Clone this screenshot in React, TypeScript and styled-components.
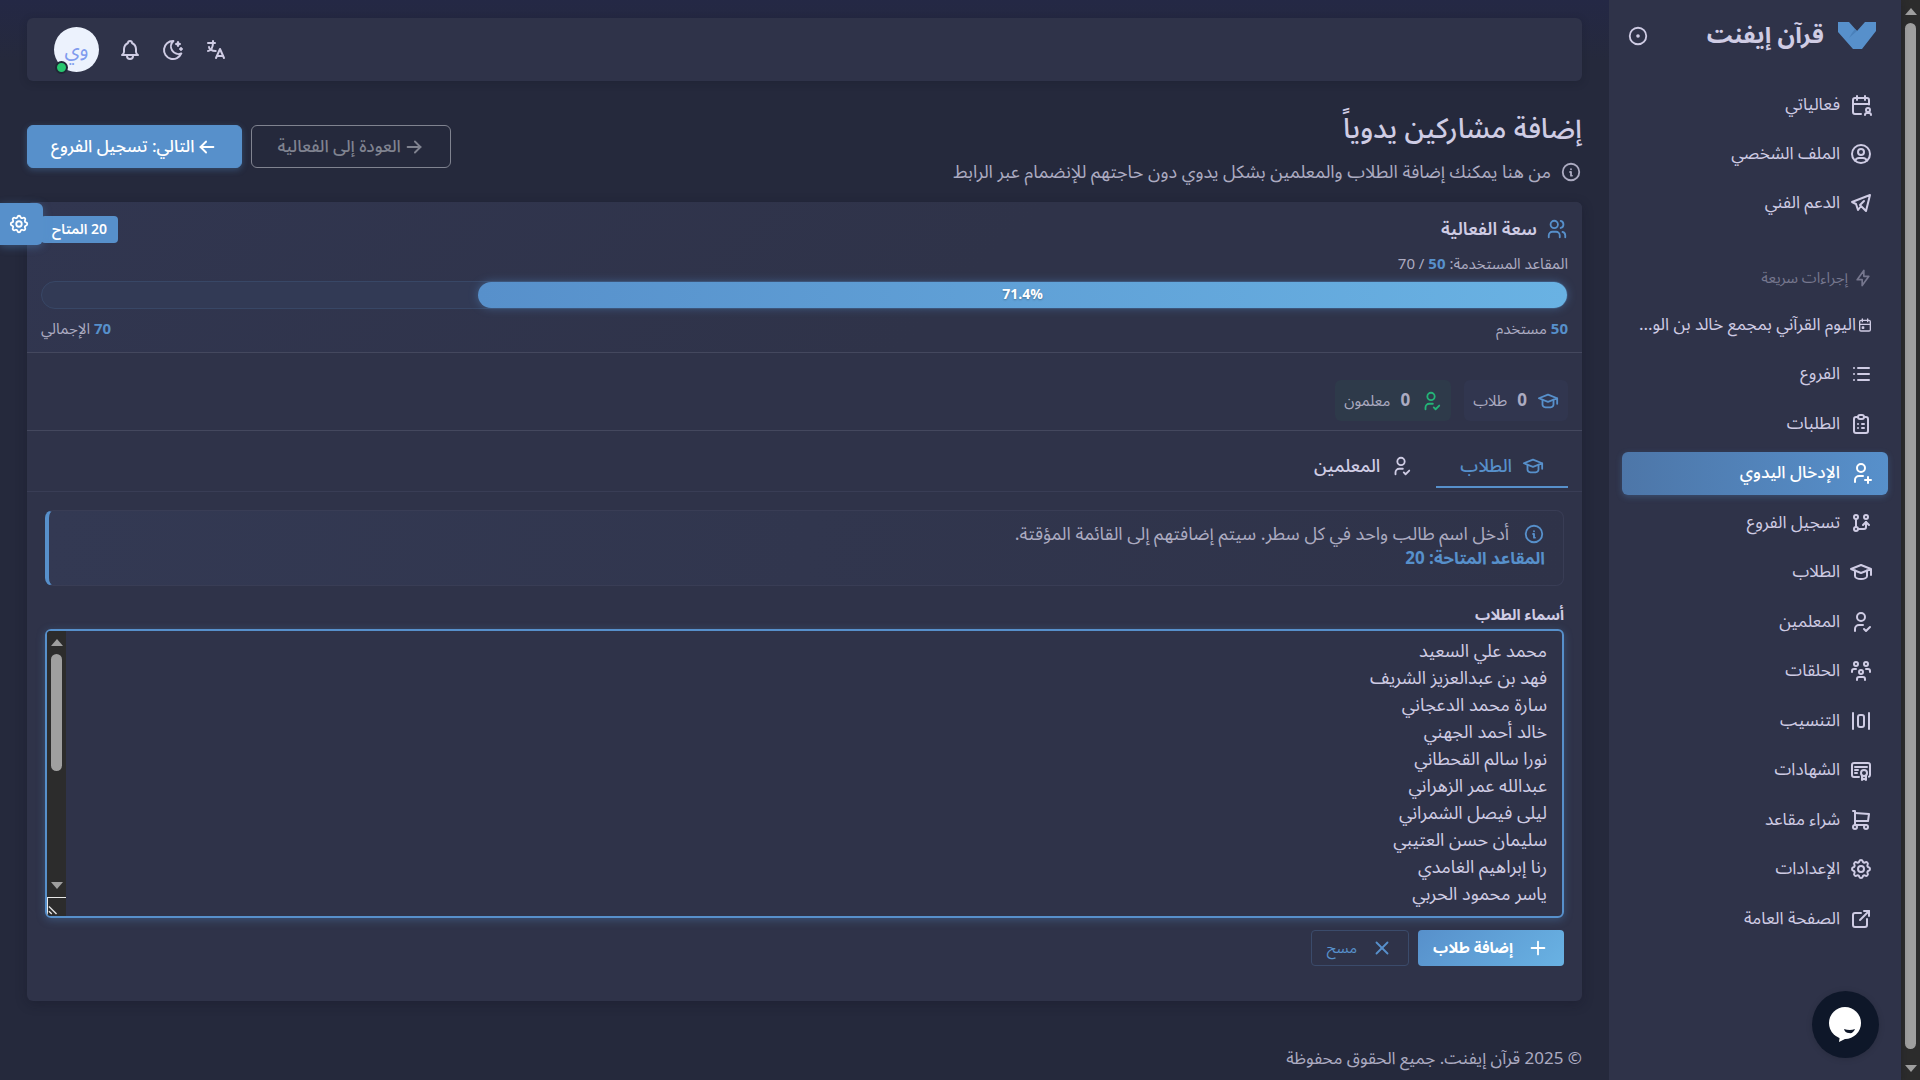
import React from "react";
import styled, { createGlobalStyle, css } from "styled-components";
import {
  TbCalendarUser, TbUserCircle, TbBrandTelegram, TbBolt, TbCalendarEvent, TbList, TbClipboardList,
  TbUserPlus, TbGitBranch, TbSchool, TbUserCheck, TbUsersGroup, TbLayoutDistributeVertical,
  TbCertificate, TbShoppingCart, TbSettings, TbExternalLink, TbMoonStars, TbBell, TbInfoCircle,
  TbUsers, TbArrowRight, TbArrowLeft, TbPlus, TbX, TbCircleDot, TbLanguage,
} from "react-icons/tb";

const c = {
  page: "#25293c",
  paper: "#2f3349",
  heading: "#cfcce4",
  text: "#acabc1",
  muted: "#76778e",
  line: "#44485e",
  faint: "#393d55",
  primary: "#5790cb",
  sky: "#69b2e3",
  green: "#24b377",
  track: "#2c2c2c",
  thumb: "#9f9f9f",
};

const Global = createGlobalStyle`
  *, *::before, *::after { box-sizing: border-box; }
  html { background: ${c.page}; }
  body { margin: 0; color: ${c.heading}; font: 17px/24px "Noto Sans Arabic", "Noto Sans", "DejaVu Sans", sans-serif; overflow: hidden; }
  button, textarea { font: inherit; color: inherit; }
  button { cursor: pointer; }
  a { color: inherit; text-decoration: none; }
  h1, h2, p, ul { margin: 0; padding: 0; }
  ul { list-style: none; }
  svg { flex: none; display: block; }
`;

const Shell = styled.div`
  display: flex;
  direction: rtl;
  height: 100vh;
  background: ${c.page};
`;

const Track = styled.div`
  flex: none;
  display: flex;
  flex-direction: column;
  align-items: center;
  width: 19px;
  padding: 8px 0;
  background: ${c.track};
`;
const Arrow = styled.span<{ $down?: boolean }>`
  flex: none;
  border: 6px solid transparent;
  border-top-width: ${(p) => (p.$down ? "7px" : "0")};
  border-bottom-width: ${(p) => (p.$down ? "0" : "7px")};
  border-top-color: ${(p) => (p.$down ? c.thumb : "transparent")};
  border-bottom-color: ${(p) => (p.$down ? "transparent" : c.thumb)};
`;
const Rail = styled.div<{ $end: string }>`
  flex: 1;
  width: 11px;
  padding: 8px 0 ${(p) => p.$end};
`;
const Thumb = styled.div<{ $size: string }>`
  height: ${(p) => p.$size};
  border-radius: 6px;
  background: ${c.thumb};
`;
const ScrollBar = ({ size, end = "8px" }: { size: string; end?: string }) => (
  <Track aria-hidden="true">
    <Arrow />
    <Rail $end={end}><Thumb $size={size} /></Rail>
    <Arrow $down />
  </Track>
);

const Sidebar = styled.aside`
  flex: none;
  display: flex;
  flex-direction: column;
  width: 292px;
  padding: 0 13px 140px;
  background: ${c.paper};
  box-shadow: 0 2px 8px rgba(15, 18, 32, 0.3);
`;
const Brand = styled.div`
  display: flex;
  align-items: center;
  gap: 14px;
  height: 72px;
  margin-bottom: 11px;
  padding: 0 12px 0 5px;
`;
const BrandName = styled.span`
  flex: 1;
  font-size: 24px;
  line-height: 32px;
  font-weight: 700;
`;
const IconButton = styled.button`
  display: flex;
  padding: 0;
  border: 0;
  background: none;
`;
const NavList = styled.ul<{ $grow?: boolean }>`
  display: flex;
  flex-direction: column;
  justify-content: space-between;
  gap: 6px;
  flex: ${(p) => (p.$grow ? "1" : "none")};
`;
const NavLink = styled.a<{ $active?: boolean; $tight?: boolean }>`
  display: flex;
  align-items: center;
  gap: ${(p) => (p.$tight ? "1px" : "9px")};
  height: 43px;
  padding: 0 15px;
  border-radius: 6px;
  white-space: nowrap;
  ${(p) => p.$active && css`
    color: #fff;
    font-weight: 500;
    background: linear-gradient(270deg, ${c.primary}, #4d76a8);
    box-shadow: 0 2px 6px rgba(87, 144, 203, 0.3);
  `}
`;
const NavHeading = styled.div`
  display: flex;
  align-items: center;
  gap: 5px;
  height: 24px;
  margin: 42px 0 13px;
  padding: 0 15px;
  color: ${c.muted};
  font-size: 15px;
`;

const Main = styled.main`
  flex: 1;
  min-width: 0;
  display: flex;
  flex-direction: column;
  padding: 18px 27px 0;
  background: linear-gradient(#242845, ${c.page} 60px);
`;
const TopBar = styled.header`
  display: flex;
  align-items: center;
  justify-content: flex-end;
  gap: 19px;
  height: 63px;
  padding: 0 27px;
  border-radius: 6px;
  background: ${c.paper};
  box-shadow: 0 2px 8px rgba(15, 18, 32, 0.2);
`;
const Avatar = styled.button`
  position: relative;
  width: 45px;
  height: 45px;
  padding: 0;
  border: 0;
  border-radius: 50%;
  background: #ecf2fd;
  color: #7f9bee;
  font-size: 20px;
`;
const Online = styled.span`
  position: absolute;
  left: 1px;
  bottom: -2px;
  width: 13px;
  height: 13px;
  border: 2px solid #1f2937;
  border-radius: 50%;
  background: #28c76f;
`;
const PageHead = styled.div`
  display: flex;
  justify-content: space-between;
  align-items: center;
  margin: 28px 0 18px;
`;
const Title = styled.h1`
  font-size: 28px;
  line-height: 42px;
  font-weight: 500;
`;
const Subtitle = styled.p`
  display: flex;
  align-items: center;
  gap: 9px;
  margin-top: 9px;
  color: ${c.text};
  font-size: 18px;
`;
const Actions = styled.div`
  display: flex;
  gap: 9px;
`;
const PageButton = styled.a<{ $solid?: boolean }>`
  display: flex;
  align-items: center;
  gap: 2px;
  height: 43px;
  padding: 0 ${(p) => (p.$solid ? "23px" : "25px")};
  border: 1px solid ${(p) => (p.$solid ? c.primary : "#808390")};
  border-radius: 6px;
  color: ${(p) => (p.$solid ? "#fff" : "#808390")};
  background: ${(p) => (p.$solid ? c.primary : "none")};
  font-weight: 500;
  box-shadow: ${(p) => (p.$solid ? "0 2px 6px rgba(87, 144, 203, 0.35)" : "none")};
`;
const Card = styled.section`
  border-radius: 6px;
  background: ${c.paper};
  box-shadow: 0 3px 12px rgba(15, 18, 32, 0.3);
`;
const Capacity = styled.div`
  padding: 13px 14px 11px;
  border-bottom: 1px solid ${c.line};
  border-radius: 6px 6px 0 0;
  background: linear-gradient(135deg, #313650, ${c.paper} 60%);
`;
const Row = styled.div`
  display: flex;
  align-items: center;
  justify-content: space-between;
`;
const SectionTitle = styled.h2`
  display: flex;
  align-items: center;
  gap: 9px;
  font-size: 18px;
  line-height: 28px;
  font-weight: 600;
  svg { color: ${c.primary}; }
`;
const Badge = styled.span`
  padding: 0 11px;
  border-radius: 4px;
  background: ${c.primary};
  color: #fff;
  font-size: 14px;
  line-height: 27px;
  font-weight: 600;
`;
const Small = styled.p`
  color: ${c.text};
  font-size: 15px;
  line-height: 24px;
`;
const Seats = styled(Small)`
  margin-top: 9px;
`;
const Strong = styled.strong`
  color: ${c.primary};
  font-weight: 700;
`;
const Meter = styled.div`
  height: 28px;
  margin: 5px 0 8px;
  border: 1px solid #384766;
  border-radius: 14px;
  background: #323a55;
`;
const MeterFill = styled.div`
  height: 26px;
  border-radius: 13px;
  background: linear-gradient(270deg, ${c.sky}, ${c.primary});
  box-shadow: 0 0 10px rgba(87, 144, 203, 0.45);
  color: #fff;
  font-size: 14px;
  line-height: 26px;
  font-weight: 700;
  text-align: center;
  text-shadow: 0 1px 2px rgba(0, 0, 0, 0.3);
`;
const Stats = styled.div`
  display: flex;
  gap: 13px;
  padding: 27px 14px 9px;
  border-bottom: 1px solid ${c.line};
`;
const Stat = styled.div<{ $green?: boolean }>`
  display: flex;
  align-items: center;
  gap: 10px;
  height: 41px;
  padding: 0 9px;
  border-radius: 6px;
  background: ${(p) => (p.$green ? "#2e3a4a" : "#31364f")};
  color: ${c.text};
  font-size: 15px;
  svg { color: ${(p) => (p.$green ? c.green : c.primary)}; }
  strong { font-size: 17px; }
`;
const Tabs = styled.div`
  display: flex;
  padding: 14px 14px 3px;
  border-bottom: 1px solid ${c.faint};
`;
const Tab = styled.button<{ $active?: boolean }>`
  display: flex;
  align-items: center;
  gap: 10px;
  height: 43px;
  padding: 0 24px;
  border: 0;
  border-bottom: 2px solid ${(p) => (p.$active ? c.primary : "transparent")};
  background: none;
  color: ${(p) => (p.$active ? c.primary : c.heading)};
  font-size: 18px;
  font-weight: 500;
`;
const Panel = styled.div`
  padding: 18px 18px 35px;
`;
const Alert = styled.div`
  display: flex;
  flex-direction: column;
  gap: 1px;
  height: 76px;
  padding: 11px 18px;
  border: 1px solid ${c.faint};
  border-left: 4px solid ${c.primary};
  border-radius: 8px;
  background: linear-gradient(100deg, #333953, ${c.paper});
  color: ${c.text};
`;
const AlertLine = styled.p`
  display: flex;
  align-items: center;
  gap: 14px;
  font-size: 18px;
  svg { color: ${c.primary}; }
`;
const Label = styled.label`
  display: block;
  margin: 17px 0 2px;
  font-size: 15px;
  line-height: 24px;
  font-weight: 700;
`;
const Field = styled.div`
  display: flex;
  border: 2px solid ${c.primary};
  border-radius: 6px;
  overflow: hidden;
  box-shadow: 0 2px 8px rgba(87, 144, 203, 0.35);
`;
const Names = styled.textarea`
  flex: 1;
  display: block;
  padding: 7px 15px 8px;
  border: 0;
  outline: 0;
  resize: none;
  background: none;
  font-size: 18px;
  line-height: 27px;
  color: ${c.heading};
  scrollbar-width: none;
`;
const FieldSide = styled.div`
  display: flex;
  flex-direction: column;
  background: ${c.track};
  > div { flex: 1; }
`;
const Grip = styled.svg`
  border-top: 1px solid #e8e8e8;
  border-left: 1px solid #e8e8e8;
`;
const FormActions = styled.div`
  display: flex;
  gap: 9px;
  margin-top: 12px;
`;
const FormButton = styled.button<{ $solid?: boolean }>`
  display: flex;
  align-items: center;
  gap: 14px;
  height: 36px;
  padding: 0 15px;
  border: ${(p) => (p.$solid ? "0" : "1px solid #3b4b6b")};
  border-radius: 4px;
  background: ${(p) => (p.$solid ? `linear-gradient(315deg, ${c.sky}, ${c.primary})` : "none")};
  color: ${(p) => (p.$solid ? "#fff" : c.primary)};
  font-size: 15px;
  font-weight: ${(p) => (p.$solid ? 700 : 400)};
`;
const Footer = styled.footer`
  margin-top: 46px;
  color: ${c.text};
`;
const Customizer = styled.button`
  position: fixed;
  left: 0;
  top: 203px;
  display: flex;
  align-items: center;
  justify-content: center;
  width: 43px;
  height: 42px;
  padding: 0 5px 0 0;
  border: 0;
  border-radius: 0 6px 6px 0;
  background: ${c.primary};
  color: #fff;
  box-shadow: 0 2px 8px rgba(87, 144, 203, 0.4);
`;
const Chat = styled.button`
  position: fixed;
  right: 41px;
  bottom: 22px;
  width: 67px;
  height: 67px;
  padding: 0;
  border: 0;
  border-radius: 50%;
  background: #0e1729;
  box-shadow: 0 1px 6px rgba(0, 0, 0, 0.15);
`;

const top = [
  { icon: TbCalendarUser, label: "فعالياتي" },
  { icon: TbUserCircle, label: "الملف الشخصي" },
  { icon: TbBrandTelegram, label: "الدعم الفني" },
];
const quick = [
  { icon: TbList, label: "الفروع" },
  { icon: TbClipboardList, label: "الطلبات" },
  { icon: TbUserPlus, label: "الإدخال اليدوي", active: true },
  { icon: TbGitBranch, label: "تسجيل الفروع" },
  { icon: TbSchool, label: "الطلاب" },
  { icon: TbUserCheck, label: "المعلمين" },
  { icon: TbUsersGroup, label: "الحلقات" },
  { icon: TbLayoutDistributeVertical, label: "التنسيب" },
  { icon: TbCertificate, label: "الشهادات" },
  { icon: TbShoppingCart, label: "شراء مقاعد" },
  { icon: TbSettings, label: "الإعدادات" },
  { icon: TbExternalLink, label: "الصفحة العامة" },
];
const names = [
  "محمد علي السعيد", "فهد بن عبدالعزيز الشريف", "سارة محمد الدعجاني", "خالد أحمد الجهني",
  "نورا سالم القحطاني", "عبدالله عمر الزهراني", "ليلى فيصل الشمراني", "سليمان حسن العتيبي",
  "رنا إبراهيم الغامدي", "ياسر محمود الحربي",
];
const used = 50;
const total = 70;
const percent = `${((used / total) * 100).toFixed(1)}%`;

export default function App() {
  return (
    <>
      <Global />
      <Shell>
        <ScrollBar size="100%" end="16px" />
        <Sidebar>
          <Brand>
            <svg width="38" height="28" viewBox="0 0 38 28" aria-hidden="true">
              <path d="M0 0h11l8 9 8-9h11v9L24 27h-9L0 10z" fill={c.primary} />
              <path d="M19 9l-8 7 3-5 3-4z" fill="#4a80ba" />
            </svg>
            <BrandName>قرآن إيفنت</BrandName>
            <IconButton aria-label="تثبيت القائمة"><TbCircleDot size={22} /></IconButton>
          </Brand>
          <NavList>
            {top.map(({ icon: Icon, label }) => (
              <li key={label}><NavLink href="#"><Icon size={24} />{label}</NavLink></li>
            ))}
          </NavList>
          <NavHeading><TbBolt size={20} />إجراءات سريعة</NavHeading>
          <NavList $grow>
            <li><NavLink href="#" $tight><TbCalendarEvent size={16} />اليوم القرآني بمجمع خالد بن الو...</NavLink></li>
            {quick.map(({ icon: Icon, label, active }) => (
              <li key={label}><NavLink href="#" $active={active}><Icon size={24} />{label}</NavLink></li>
            ))}
          </NavList>
        </Sidebar>

        <Main>
          <TopBar>
            <IconButton aria-label="اللغة"><TbLanguage size={24} /></IconButton>
            <IconButton aria-label="المظهر"><TbMoonStars size={24} /></IconButton>
            <IconButton aria-label="الإشعارات"><TbBell size={24} /></IconButton>
            <Avatar>وي<Online /></Avatar>
          </TopBar>

          <PageHead>
            <div>
              <Title>إضافة مشاركين يدوياً</Title>
              <Subtitle><TbInfoCircle size={22} />من هنا يمكنك إضافة الطلاب والمعلمين بشكل يدوي دون حاجتهم للإنضمام عبر الرابط</Subtitle>
            </div>
            <Actions>
              <PageButton href="#"><TbArrowRight size={22} />العودة إلى الفعالية</PageButton>
              <PageButton href="#" $solid><TbArrowLeft size={22} />التالي: تسجيل الفروع</PageButton>
            </Actions>
          </PageHead>

          <Card>
            <Capacity>
              <Row>
                <SectionTitle><TbUsers size={22} />سعة الفعالية</SectionTitle>
                <Badge>20 المتاح</Badge>
              </Row>
              <Seats>المقاعد المستخدمة: <Strong>{used}</Strong> / {total}</Seats>
              <Meter><MeterFill style={{ width: percent }}>{percent}</MeterFill></Meter>
              <Row>
                <Small><Strong>{used}</Strong> مستخدم</Small>
                <Small><Strong>{total}</Strong> الإجمالي</Small>
              </Row>
            </Capacity>
            <Stats>
              <Stat><TbSchool size={22} /><strong>0</strong>طلاب</Stat>
              <Stat $green><TbUserCheck size={22} /><strong>0</strong>معلمون</Stat>
            </Stats>
            <Tabs role="tablist">
              <Tab role="tab" aria-selected="true" $active><TbSchool size={22} />الطلاب</Tab>
              <Tab role="tab" aria-selected="false"><TbUserCheck size={22} />المعلمين</Tab>
            </Tabs>
            <Panel>
              <Alert>
                <AlertLine><TbInfoCircle size={22} />أدخل اسم طالب واحد في كل سطر. سيتم إضافتهم إلى القائمة المؤقتة.</AlertLine>
                <Strong>المقاعد المتاحة: 20</Strong>
              </Alert>
              <Label htmlFor="names">أسماء الطلاب</Label>
              <Field>
                <Names id="names" rows={10} defaultValue={names.join("\n")} />
                <FieldSide>
                  <ScrollBar size="53%" />
                  <Grip width="19" height="19" viewBox="0 0 19 19" aria-hidden="true">
                    <path d="M1 9l8 8M1 14l3 3" stroke="#e0e0e0" strokeWidth="1.5" />
                  </Grip>
                </FieldSide>
              </Field>
              <FormActions>
                <FormButton type="button" $solid><TbPlus size={22} />إضافة طلاب</FormButton>
                <FormButton type="button"><TbX size={22} />مسح</FormButton>
              </FormActions>
            </Panel>
          </Card>
          <Footer>© 2025 قرآن إيفنت. جميع الحقوق محفوظة</Footer>
        </Main>
      </Shell>
      <Customizer aria-label="إعدادات القالب"><TbSettings size={22} /></Customizer>
      <Chat aria-label="الدردشة">
        <svg width="67" height="67" viewBox="0 0 67 67" aria-hidden="true">
          <circle cx="33" cy="32" r="16" fill="#fff" />
          <path d="M28 44l-1 7 12-6z" fill="#fff" />
          <path d="M32 38q6 2 11 0q-2 5-6 4q-4 0-5-4z" fill="#0e1729" />
        </svg>
      </Chat>
    </>
  );
}
